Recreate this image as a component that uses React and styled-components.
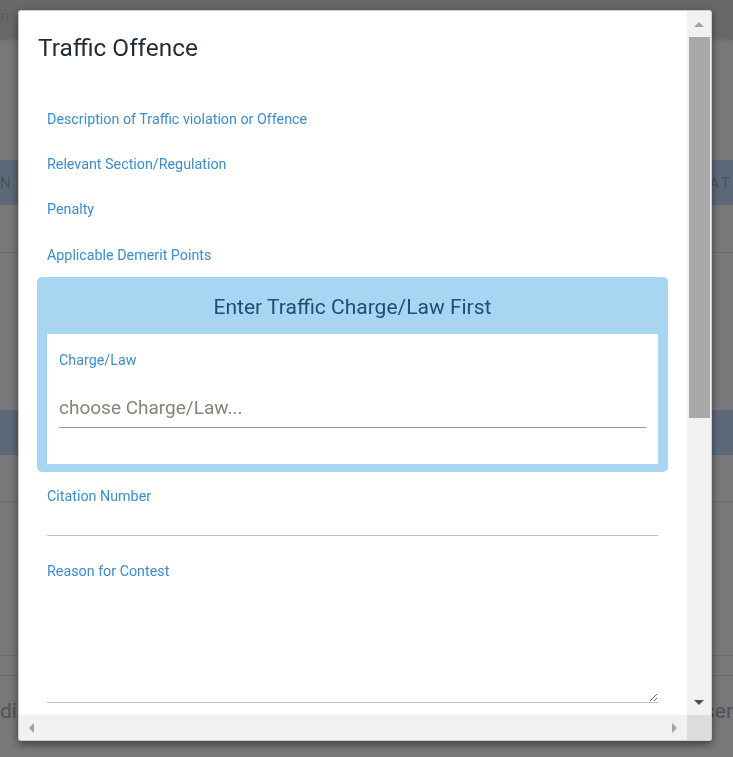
import React from "react";
import styled, { createGlobalStyle } from "styled-components";

const Global = createGlobalStyle`
  html, body { margin: 0; padding: 0; }
  body {
    font-family: Roboto, "Liberation Sans", Arial, sans-serif;
    background: #f4f3f8;
    overflow: hidden;
    height: 757px;
  }
  * { box-sizing: border-box; }
`;

/* ---------- background page ---------- */
const Page = styled.div`
  height: 757px;
  display: flex;
  flex-direction: column;
  color: #666;
  overflow: hidden;
`;

const TopBar = styled.div`
  height: 39px;
  background: #d4d4d4;
  box-shadow: 0 1px 3px rgba(0, 0, 0, 0.15);
  font-size: 17px;
  line-height: 32px;
  color: #bbb;
`;

const Band = styled.div`
  height: 45px;
  margin-top: ${(p) => p.$mt}px;
  background: #bcd6f4;
  display: flex;
  justify-content: space-between;
  align-items: center;
  font-size: 15px;
  letter-spacing: 3px;
  color: #9aa7b6;
`;

const Rule = styled.div`
  height: 1px;
  margin-top: ${(p) => p.$mt}px;
  background: #d9d8de;
`;

const FootRow = styled.div`
  margin-top: 22px;
  display: flex;
  justify-content: space-between;
  font-size: 21px;
  line-height: 26px;
  color: #a8a7ad;
  padding-right: 0;
`;

const FootText = styled.span`
  font-size: 21px;
`;

const Backdrop = styled.div`
  position: fixed;
  inset: 0;
  background: rgba(0, 0, 0, 0.51);
`;

/* ---------- modal ---------- */
const Modal = styled.div`
  position: fixed;
  left: 18px;
  top: 10px;
  width: 694px;
  height: 731px;
  background: #fff;
  border: 1px solid rgba(0, 0, 0, 0.2);
  border-radius: 3px;
  box-shadow: 0 3px 9px rgba(0, 0, 0, 0.5);
  overflow: hidden;
  display: grid;
  grid-template-columns: 1fr 24px;
  grid-template-rows: 1fr 25px;
`;

const Viewport = styled.div`
  overflow: hidden;
  min-height: 0;
`;

const VBar = styled.div`
  background: #f1f1f1;
  display: flex;
  flex-direction: column;
`;

const HBar = styled.div`
  background: #f1f1f1;
  display: flex;
`;

const Corner = styled.div`
  background: #dcdcdc;
`;

const ArrowBtn = styled.div`
  flex: none;
  width: 24px;
  height: 25px;
  display: flex;
  align-items: center;
  justify-content: center;
`;

const VTrack = styled.div`
  flex: 1;
  padding: 1px 1px 0 2px;
`;

const Thumb = styled.div`
  height: 381px;
  background: #a8a8a8;
`;

const HTrack = styled.div`
  flex: 1;
`;

const Content = styled.div`
  padding: 24px 19px 0 18px;
`;

const Title = styled.h4`
  margin: 0 0 35px 0;
  padding-left: 1px;
  font-size: 24.4px;
  line-height: 26px;
  font-weight: 400;
  color: #1f2b36;
`;

const Label = styled.label`
  display: block;
  font-size: 14.3px;
  line-height: 16px;
  color: #3b8dcf;
`;

const InfoRow = styled.div`
  height: 45.3px;
  padding: 0 10px;
  display: flex;
  align-items: center;
`;

const ChargePanel = styled.div`
  background: #a8d5f1;
  border-radius: 5px;
  padding: 0 10px 8px;
`;

const PanelHeading = styled.div`
  padding: 18px 0 15px;
  text-align: center;
  font-size: 21px;
  line-height: 24px;
  color: #1d4f70;
`;

const PanelBody = styled.div`
  background: #fff;
  padding: 18px 12px 36px;
`;

const SelectInput = styled.input`
  display: block;
  width: 100%;
  height: 40px;
  margin-top: 20px;
  padding: 0;
  border: none;
  border-bottom: 1px solid #9a9a9a;
  font-family: Roboto, "Liberation Sans", Arial, sans-serif;
  font-size: 19px;
  color: #333;
  outline: none;
  background: transparent;
  &::placeholder {
    color: #8b8179;
  }
`;

const Field = styled.div`
  padding: 0 10px;
  margin-top: ${(p) => p.$mt}px;
`;

const TextInput = styled.input`
  display: block;
  width: 100%;
  height: 32px;
  padding: 0;
  border: none;
  border-bottom: 1px solid #c2c2c2;
  outline: none;
  font-family: inherit;
  font-size: 15px;
  background: transparent;
`;

const TextArea = styled.textarea`
  display: block;
  width: 100%;
  height: 124px;
  margin: 0;
  padding: 0;
  border: none;
  border-bottom: 1px solid #c2c2c2;
  outline: none;
  font-family: inherit;
  font-size: 15px;
  resize: vertical;
  background: transparent;
`;

const Arrow = ({ dir, color }) => {
  const pts = {
    up: "0,6 10,6 5,1",
    down: "0,0 10,0 5,5",
    left: "6,0 6,10 1,5",
    right: "0,0 0,10 5,5",
  }[dir];
  const vertical = dir === "up" || dir === "down";
  return (
    <svg width={vertical ? 10 : 6} height={vertical ? 6 : 10}>
      <polygon points={pts} fill={color} />
    </svg>
  );
};

export default function App() {
  const info = [
    "Description of Traffic violation or Offence",
    "Relevant Section/Regulation",
    "Penalty",
    "Applicable Demerit Points",
  ];
  return (
    <>
      <Global />
      <Page>
        <TopBar>n</TopBar>
        <Band $mt={121}>
          <span>N T</span>
          <span>AT</span>
        </Band>
        <Rule $mt={47} />
        <Band $mt={157}>
          <span></span>
          <span></span>
        </Band>
        <Rule $mt={46} />
        <Rule $mt={153} />
        <Rule $mt={19} />
        <FootRow>
          <FootText>dic</FootText>
          <FootText>ser</FootText>
        </FootRow>
      </Page>
      <Backdrop />
      <Modal>
        <Viewport>
          <Content>
            <Title>Traffic Offence</Title>
            {info.map((t) => (
              <InfoRow key={t}>
                <Label>{t}</Label>
              </InfoRow>
            ))}
            <ChargePanel>
              <PanelHeading>Enter Traffic Charge/Law First</PanelHeading>
              <PanelBody>
                <Label>Charge/Law</Label>
                <SelectInput placeholder="choose Charge/Law..." />
              </PanelBody>
            </ChargePanel>
            <Field $mt={16}>
              <Label>Citation Number</Label>
              <TextInput />
            </Field>
            <Field $mt={27}>
              <Label>Reason for Contest</Label>
              <TextArea />
            </Field>
          </Content>
        </Viewport>
        <VBar>
          <ArrowBtn>
            <Arrow dir="up" color="#a3a3a3" />
          </ArrowBtn>
          <VTrack>
            <Thumb />
          </VTrack>
          <ArrowBtn>
            <Arrow dir="down" color="#505050" />
          </ArrowBtn>
        </VBar>
        <HBar>
          <ArrowBtn>
            <Arrow dir="left" color="#a3a3a3" />
          </ArrowBtn>
          <HTrack />
          <ArrowBtn>
            <Arrow dir="right" color="#a3a3a3" />
          </ArrowBtn>
        </HBar>
        <Corner />
      </Modal>
    </>
  );
}
